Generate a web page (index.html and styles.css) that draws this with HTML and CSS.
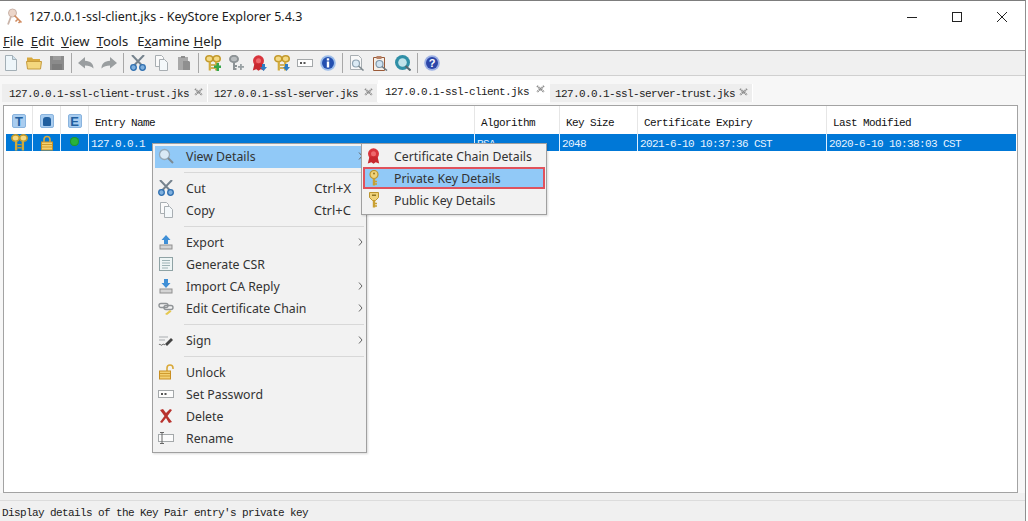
FILE: index.html
```html
<!DOCTYPE html>
<html lang="en">
<head>
<meta charset="utf-8">
<title>KeyStore Explorer</title>
<link rel="stylesheet" href="styles.css">
</head>
<body>
<svg class="defs" xmlns="http://www.w3.org/2000/svg">
  <symbol id="i-new" viewBox="0 0 16 16"><path d="M2.500 .5h7l4 4v11h-11z" fill="#eef6fa" stroke="#a3afb6"/><path d="M9.500 .5v4h4" fill="#cfe1eb" stroke="#a3afb6"/></symbol>
  <symbol id="i-open" viewBox="0 0 16 16"><path d="M1 2.500h5l1 1.500h7v3H1z" fill="#d8a93f"/><path d="M.5 6.500h15l-1 7.500h-13z" fill="#f4d77e" stroke="#c59a3c"/></symbol>
  <symbol id="i-save" viewBox="0 0 16 16"><rect x="1" y="1" width="14" height="14" fill="#8b8b8b"/><rect x="4" y="1" width="8" height="4" fill="#9d9d9d"/><rect x="3" y="9" width="10" height="6" fill="#7c7c7c"/></symbol>
  <symbol id="i-undo" viewBox="0 0 16 16"><path d="M7 2 0 8l7 5.500V10.500c3.500 0 6 .8 8.500 3 0-5-3-7.500-8.500-7.800z" fill="#9a9ea0"/></symbol>
  <symbol id="i-redo" viewBox="0 0 16 16"><path d="M9 2l7 6-7 5.500V10.500c-3.500 0-6 .8-8.500 3 0-5 3-7.500 8.500-7.800z" fill="#9a9ea0"/></symbol>
  <symbol id="i-cut" viewBox="0 0 16 16"><path d="M2 0l9.500 10M14 0 4.500 10" stroke="#76838e" stroke-width="2" fill="none"/><circle cx="3.500" cy="12.500" r="2.800" fill="#7fb0de" stroke="#2f6fb0" stroke-width="1.300"/><circle cx="12.500" cy="12.500" r="2.800" fill="#7fb0de" stroke="#2f6fb0" stroke-width="1.300"/></symbol>
  <symbol id="i-copy" viewBox="0 0 16 16"><path d="M2.500 .5h6l2 2v9h-8z" fill="#fafafa" stroke="#a8aeb2"/><path d="M6.500 4.500h5l3 3v8h-8z" fill="#f4f8fa" stroke="#a8aeb2"/></symbol>
  <symbol id="i-paste" viewBox="0 0 16 16"><path d="M2 2h10v13H2z" fill="#a8a8a8"/><path d="M5 1h4v2H5z" fill="#8c8c8c"/><path d="M7 6h6l1 1v8H7z" fill="#8f8f8f"/></symbol>
  <symbol id="i-keys" viewBox="0 0 16 16"><g fill="none" stroke="#c39a2c" stroke-width="1.600"><ellipse cx="4.300" cy="3.800" rx="3.500" ry="3" fill="#f4da85"/><ellipse cx="11.700" cy="3.800" rx="3.500" ry="3" fill="#f4da85"/></g><g fill="none" stroke="#d2ab3c" stroke-width="2.200"><path d="M4.800 6.500v9M11.200 6.500v9"/></g><path d="M6 10h2M6 13h2M10 10H8M10 13H8" stroke="#c39a2c" stroke-width="1.300"/></symbol>
  <symbol id="i-keygen" viewBox="0 0 16 16"><use href="#i-keys"/><path d="M9 10.500h2.500V8h2.500v2.500H16V13h-2v3h-2.500v-3H9z" fill="#35a64a"/></symbol>
  <symbol id="i-keypair" viewBox="0 0 16 16"><g fill="none" stroke="#8d9396" stroke-width="2"><ellipse cx="6" cy="4" rx="4" ry="3.200" fill="#b9bdbf"/><path d="M6 7v8M6 11h3M6 14h2.500"/></g><path d="M10 11h2V9h1.800v2H16v1.800h-2.200V15H12v-2.200h-2z" fill="#98a0a3"/></symbol>
  <symbol id="i-cert" viewBox="0 0 16 16"><circle cx="7.500" cy="5.800" r="5.500" fill="#d8343c"/><path d="M3.500 8.500 1.800 15.500l3.500-1.300 2.200 1.500 2.200-1.500 3.500 1.300-1.700-7z" fill="#c8282f"/><circle cx="7.500" cy="5.800" r="2.500" fill="#ee6a6e"/></symbol>
  <symbol id="i-certdown" viewBox="0 0 16 16"><use href="#i-cert"/><path d="M11 9h3v3h2l-3.500 4L9 12h2z" fill="#2d7cc4"/></symbol>
  <symbol id="i-keysdown" viewBox="0 0 16 16"><use href="#i-keys"/><path d="M11 9h3v3h2l-3.500 4L9 12h2z" fill="#2d7cc4"/></symbol>
  <symbol id="i-pass" viewBox="0 0 16 16"><rect x=".5" y="4.500" width="15" height="7" fill="#fdfdfd" stroke="#a4a8aa"/><rect x="3" y="7" width="2" height="2" fill="#555"/><rect x="6.500" y="7" width="2" height="2" fill="#555"/></symbol>
  <symbol id="i-info" viewBox="0 0 16 16"><circle cx="8" cy="8" r="7.800" fill="#9cbdea"/><circle cx="8" cy="8" r="6" fill="#2450b0"/><rect x="6.800" y="3.300" width="2.400" height="2.200" fill="#fff"/><rect x="6.800" y="6.500" width="2.400" height="6" fill="#fff"/></symbol>
  <symbol id="i-help" viewBox="0 0 16 16"><circle cx="8" cy="8" r="7.800" fill="#9cb0e4"/><circle cx="8" cy="8" r="6" fill="#2c46a8"/><text x="8" y="12" text-anchor="middle" font-family="Liberation Sans" font-weight="700" font-size="11" fill="#fff">?</text></symbol>
  <symbol id="i-finddoc" viewBox="0 0 16 16"><path d="M1.500 .5h8l3 3v11h-11z" fill="#f8f8f8" stroke="#a8aeb2"/><circle cx="7" cy="8.500" r="3.500" fill="#dcebf5" stroke="#8ea3b2" stroke-width="1.200"/><path d="M9.500 11l5 4.500" stroke="#7f8a90" stroke-width="1.600"/></symbol>
  <symbol id="i-findclip" viewBox="0 0 16 16"><path d="M1.500 2.500h11v13h-11z" fill="#f5efe8" stroke="#9a5a38"/><path d="M4.500 1h5v3h-5z" fill="#b98266"/><circle cx="7.500" cy="9" r="3.500" fill="#cfe3f2" stroke="#7f97aa" stroke-width="1.200"/><path d="M10 11.500l5 4" stroke="#6f7a80" stroke-width="1.600"/></symbol>
  <symbol id="i-findweb" viewBox="0 0 16 16"><circle cx="7.500" cy="7.500" r="7.500" fill="#2f8fa6"/><circle cx="7.500" cy="7.500" r="4.300" fill="#bfe3ea"/><path d="M10.500 11l5 4.500" stroke="#55666e" stroke-width="2"/></symbol>
  <symbol id="i-lock" viewBox="0 0 16 16"><path d="M5 7V4.500a3 3 0 0 1 6 0V7" fill="none" stroke="#d9a93a" stroke-width="1.600"/><rect x="2.500" y="7" width="11" height="8" fill="#f3d071" stroke="#c98f22"/><path d="M3 9.500h10M3 12h10" stroke="#cf9b2e"/></symbol>
  <symbol id="i-unlock" viewBox="0 0 16 16"><path d="M9 7V4a3 3 0 0 1 6 0v1" fill="none" stroke="#d9a93a" stroke-width="1.600"/><rect x="1.500" y="7" width="11" height="8" fill="#f3d071" stroke="#c98f22"/><path d="M2 9.500h10M2 12h10" stroke="#cf9b2e"/></symbol>
  <symbol id="i-view" viewBox="0 0 16 16"><circle cx="6.500" cy="6.500" r="5" fill="#d9e9f5" stroke="#94a8b8" stroke-width="1.300"/><path d="M10 10l5 5" stroke="#7d8a92" stroke-width="2"/></symbol>
  <symbol id="i-export" viewBox="0 0 16 16"><path d="M8 1l4.500 5H10v4H6V6H3.500z" fill="#3f8fd6"/><rect x="2" y="11" width="12" height="4" fill="#d4d4d4" stroke="#8f8f8f"/></symbol>
  <symbol id="i-import" viewBox="0 0 16 16"><path d="M6 1h4v4h2.500L8 10 3.500 5H6z" fill="#3f8fd6"/><rect x="2" y="11" width="12" height="4" fill="#d4d4d4" stroke="#8f8f8f"/></symbol>
  <symbol id="i-csr" viewBox="0 0 16 16"><rect x="1.500" y="1.500" width="13" height="13" fill="#eef5f5" stroke="#8fa3a5"/><path d="M4 4.500h8M4 7h8M4 9.500h8M4 12h6" stroke="#9db3b5"/></symbol>
  <symbol id="i-chain" viewBox="0 0 16 16"><rect x="1" y="3.500" width="9" height="4" rx="2" fill="none" stroke="#8f9396" stroke-width="1.400"/><rect x="6" y="5.500" width="9" height="4" rx="2" fill="none" stroke="#8f9396" stroke-width="1.400"/><path d="M7 14l5-4 1.500 1.500-4.500 3.500z" fill="#e6c84f"/></symbol>
  <symbol id="i-sign" viewBox="0 0 16 16"><path d="M1 5h9M1 8h6" stroke="#a9adb0"/><path d="M1 13c1-2 2 1 3 0s2-1 3 0" fill="none" stroke="#555"/><path d="M7 12l6-6 2 2-6 6z" fill="#444"/></symbol>
  <symbol id="i-delete" viewBox="0 0 16 16"><path d="M2 2l3-1 3 4 4-4 2 1-4.500 6L14 14l-3 1-3-5-4 5-2-1 4.500-6z" fill="#b8322d"/></symbol>
  <symbol id="i-rename" viewBox="0 0 16 16"><rect x=".5" y="4.500" width="15" height="7" fill="#fbfbfb" stroke="#a4a8aa"/><path d="M2 2.500h4M4 2.500v11M2 13.500h4" stroke="#666" fill="none"/></symbol>
  <symbol id="i-key" viewBox="0 0 16 16"><circle cx="8" cy="4.500" r="4" fill="#efd27a" stroke="#bd962f" stroke-width="1.200"/><circle cx="8" cy="3.500" r="1" fill="#8f7425"/><path d="M8 8.500V15.500" stroke="#c9a032" stroke-width="2.400"/><path d="M9 11.500h2M9 14h2" stroke="#c9a032" stroke-width="1.400"/></symbol>
  <symbol id="i-pubkey" viewBox="0 0 16 16"><path d="M3.500 .5h9v5l-3 3h-3l-3-3z" fill="#efd27a" stroke="#bd962f"/><rect x="6" y="2.500" width="4" height="1.500" fill="#8f7425"/><path d="M8 8.500V15.500" stroke="#c9a032" stroke-width="2.400"/><path d="M9 11.500h2M9 14h2" stroke="#c9a032" stroke-width="1.400"/></symbol>
  <symbol id="i-chev" viewBox="0 0 5 8"><path d="M1 .5 4 4 1 7.500" fill="none" stroke="#666"/></symbol>
  <symbol id="i-close" viewBox="0 0 9 8"><path d="M1 1l7 6M8 1 1 7" stroke="#8c8c8c" stroke-width="2" stroke-dasharray="1.300 .5"/></symbol>
  <symbol id="i-app" viewBox="0 0 18 18"><circle cx="6.500" cy="5" r="4" fill="#ecd6ca" stroke="#c9b3a8"/><path d="M8.500 7.500l7 7M12 11l-2.500 2.500M14.500 13l-2 2" stroke="#d08a5e" stroke-width="1.600"/><path d="M5 8.500 2 16.500" stroke="#c9b3a8" stroke-width="1.800"/></symbol>
</svg>

<div class="window">
  <header class="titlebar">
    <svg class="app-icon"><use href="#i-app"/></svg>
    <span class="title">127.0.0.1-ssl-client.jks - KeyStore Explorer 5.4.3</span>
    <div class="controls">
      <svg class="ctl" viewBox="0 0 10 10"><path d="M0 5.500h10" stroke="#222"/></svg>
      <svg class="ctl" viewBox="0 0 10 10"><rect x=".5" y=".5" width="9" height="9" fill="none" stroke="#222"/></svg>
      <svg class="ctl" viewBox="0 0 10 10"><path d="M0 0l10 10M10 0 0 10" stroke="#222"/></svg>
    </div>
  </header>
  <nav class="menubar">
    <span><u>F</u>ile</span><span><u>E</u>dit</span><span><u>V</u>iew</span><span><u>T</u>ools</span><span class="m-exam">E<u>x</u>amine</span><span><u>H</u>elp</span>
  </nav>
  <div class="toolbar">
    <svg class="tool"><use href="#i-new"/></svg>
    <svg class="tool"><use href="#i-open"/></svg>
    <svg class="tool"><use href="#i-save"/></svg>
    <i class="tsep"></i>
    <svg class="tool"><use href="#i-undo"/></svg>
    <svg class="tool"><use href="#i-redo"/></svg>
    <i class="tsep"></i>
    <svg class="tool"><use href="#i-cut"/></svg>
    <svg class="tool"><use href="#i-copy"/></svg>
    <svg class="tool"><use href="#i-paste"/></svg>
    <i class="tsep"></i>
    <svg class="tool"><use href="#i-keygen"/></svg>
    <svg class="tool"><use href="#i-keypair"/></svg>
    <svg class="tool"><use href="#i-certdown"/></svg>
    <svg class="tool"><use href="#i-keysdown"/></svg>
    <svg class="tool"><use href="#i-pass"/></svg>
    <svg class="tool"><use href="#i-info"/></svg>
    <i class="tsep"></i>
    <svg class="tool"><use href="#i-finddoc"/></svg>
    <svg class="tool"><use href="#i-findclip"/></svg>
    <svg class="tool"><use href="#i-findweb"/></svg>
    <i class="tsep"></i>
    <svg class="tool"><use href="#i-help"/></svg>
  </div>
  <div class="tabs">
    <div class="tab t1"><span>127.0.0.1-ssl-client-trust.jks</span><svg class="x"><use href="#i-close"/></svg></div>
    <div class="tab t2"><span>127.0.0.1-ssl-server.jks</span><svg class="x"><use href="#i-close"/></svg></div>
    <div class="tab t3 active"><span>127.0.0.1-ssl-client.jks</span><svg class="x"><use href="#i-close"/></svg></div>
    <div class="tab t4"><span>127.0.0.1-ssl-server-trust.jks</span><svg class="x"><use href="#i-close"/></svg></div>
  </div>
  <main class="pane">
    <div class="grid head">
      <div class="hc ic"><b class="badge">T</b></div>
      <div class="hc ic"><b class="badge"><i class="badge-lock"></i></b></div>
      <div class="hc ic"><b class="badge">E</b></div>
      <div class="hc">Entry Name</div>
      <div class="hc">Algorithm</div>
      <div class="hc">Key Size</div>
      <div class="hc">Certificate Expiry</div>
      <div class="hc last">Last Modified</div>
    </div>
    <div class="grid row">
      <div class="rc ic"><svg class="cell-icon wide"><use href="#i-keys"/></svg></div>
      <div class="rc ic"><svg class="cell-icon"><use href="#i-lock"/></svg></div>
      <div class="rc ic"><i class="dot"></i></div>
      <div class="rc">127.0.0.1</div>
      <div class="rc">RSA</div>
      <div class="rc">2048</div>
      <div class="rc">2021-6-10 10:37:36 CST</div>
      <div class="rc last">2020-6-10 10:38:03 CST</div>
    </div>
  </main>
  <div class="gap"></div>
  <footer class="status">Display details of the Key Pair entry's private key</footer>

  <div class="menu main-menu">
    <div class="item hot"><svg class="mi"><use href="#i-view"/></svg><span>View Details</span><svg class="chev"><use href="#i-chev"/></svg></div>
    <hr>
    <div class="item"><svg class="mi"><use href="#i-cut"/></svg><span>Cut</span><span class="sc">Ctrl+X</span></div>
    <div class="item"><svg class="mi"><use href="#i-copy"/></svg><span>Copy</span><span class="sc">Ctrl+C</span></div>
    <hr>
    <div class="item"><svg class="mi"><use href="#i-export"/></svg><span>Export</span><svg class="chev"><use href="#i-chev"/></svg></div>
    <div class="item"><svg class="mi"><use href="#i-csr"/></svg><span>Generate CSR</span></div>
    <div class="item"><svg class="mi"><use href="#i-import"/></svg><span>Import CA Reply</span><svg class="chev"><use href="#i-chev"/></svg></div>
    <div class="item"><svg class="mi"><use href="#i-chain"/></svg><span>Edit Certificate Chain</span><svg class="chev"><use href="#i-chev"/></svg></div>
    <hr>
    <div class="item"><svg class="mi"><use href="#i-sign"/></svg><span>Sign</span><svg class="chev"><use href="#i-chev"/></svg></div>
    <hr>
    <div class="item"><svg class="mi"><use href="#i-unlock"/></svg><span>Unlock</span></div>
    <div class="item"><svg class="mi"><use href="#i-pass"/></svg><span>Set Password</span></div>
    <div class="item"><svg class="mi"><use href="#i-delete"/></svg><span>Delete</span></div>
    <div class="item"><svg class="mi"><use href="#i-rename"/></svg><span>Rename</span></div>
  </div>

  <div class="menu sub-menu">
    <div class="item"><svg class="mi"><use href="#i-cert"/></svg><span>Certificate Chain Details</span></div>
    <div class="item hot marked"><svg class="mi"><use href="#i-key"/></svg><span>Private Key Details</span></div>
    <div class="item"><svg class="mi"><use href="#i-pubkey"/></svg><span>Public Key Details</span></div>
  </div>
</div>
</body>
</html>
```

FILE: styles.css
```css
* { box-sizing: border-box; }
html, body { margin: 0; height: 100%; background: #fff; }
.defs { display: none; }

.window {
  position: relative;
  width: 1026px;
  height: 521px;
  display: flex;
  flex-direction: column;
  overflow: hidden;
  border-top: 1px solid #7d7d7d;
  border-right: 1px solid #8f8f8f;
  font-family: "Noto Sans", sans-serif;
  font-size: 13px;
  color: #222;
  background: #f7f7f7;
}

.titlebar {
  height: 31px;
  flex: none;
  display: flex;
  align-items: center;
  background: #fff;
  padding-left: 6px;
}
.app-icon { width: 18px; height: 18px; margin-right: 5px; }
.title { font-size: 12.500px; color: #1c1c1c; }
.controls { margin-left: auto; display: flex; gap: 35px; padding-right: 18px; }
.ctl { width: 10px; height: 10px; }

.menubar {
  height: 18px;
  flex: none;
  background: #fff;
  display: flex;
  gap: 7px;
  padding-left: 3px;
  line-height: 18px;
  font-size: 13px;
  color: #222;
}
.m-exam { margin-left: 2px; margin-right: -3px; }

.toolbar {
  height: 26px;
  flex: none;
  display: flex;
  align-items: center;
  gap: 7px;
  padding-left: 3px;
  background: #f0f0f0;
  border-top: 1px solid #a2a2a2;
  border-bottom: 1px solid #d0d0d0;
}
.tool { width: 16px; height: 16px; flex: none; }
.tsep { width: 1px; height: 20px; background: #a8a8a8; margin: 0 -1px; flex: none; }

.tabs {
  height: 29px;
  flex: none;
  display: flex;
  align-items: flex-end;
  padding: 0 0 3px 2px;
  font-family: "Liberation Mono", monospace;
  font-size: 11px;
  letter-spacing: -.6px;
  background: #f7f7f7;
  color: #222;
}
.tab {
  height: 18px;
  display: flex;
  align-items: center;
  padding-top: 2px;
  padding-left: 7px;
  background: #eeeeee;
  border-right: 1px solid #fff;
  white-space: pre;
}
.t1 { width: 206px; }
.t2 { width: 170px; padding-left: 6px; }
.t3 { width: 172px; }
.t4 { width: 203px; padding-left: 5px; }
.tab.active { height: 23px; background: #fff; margin-bottom: -1px; padding-top: 0; }
.x {
  width: 9px;
  height: 8px;
  margin-left: auto;
  margin-right: 4px;
  margin-bottom: 5px;
  flex: none;
}

.pane {
  flex: none;
  height: 388px;
  margin: 0 7px 0 3px;
  padding: 0 1px 0 2px;
  border: 1px solid #a3a3a3;
  background: #fff;
  font-family: "Liberation Mono", monospace;
  font-size: 11px;
  letter-spacing: -.6px;
}
.grid {
  display: grid;
  grid-template-columns: 27px 28px 28px 386px 85px 78px 189px 189px;
}
.head { height: 28px; }
.hc {
  display: flex;
  align-items: center;
  padding: 6px 0 0 6px;
  color: #111;
  white-space: pre;
  border-right: 1px solid #e6e6e6;
}
.hc.last { border-right: 0; }
.hc.ic, .rc.ic { justify-content: center; padding: 0; }
.hc.ic { padding-top: 2px; }
.badge {
  width: 14px;
  height: 14px;
  display: flex;
  align-items: center;
  justify-content: center;
  background: #a9cdf0;
  border: 1px solid #8ab4de;
  border-radius: 2px;
  color: #215f9f;
  font: 700 13px "Liberation Sans", sans-serif;
  letter-spacing: 0;
}
.badge-lock { width: 8px; height: 9px; background: #215f9f; border-radius: 3px 3px 1px 1px; }
.row { height: 17px; background: #0078d7; color: #e8f4ff; }
.rc {
  display: flex;
  align-items: center;
  padding: 2px 0 0 2px;
  white-space: pre;
  border-right: 1px solid #dff0ff;
}
.rc.last { border-right: 0; }
.cell-icon { width: 16px; height: 16px; }
.cell-icon.wide { width: 17px; height: 17px; }
.dot {
  width: 9px;
  height: 9px;
  border-radius: 50%;
  background: #28b33c;
  box-shadow: inset 0 0 0 1px #1d8f36;
  margin-top: -3px;
}

.gap { height: 8px; flex: none; background: #f0f0f0; border-bottom: 1px solid #dcdcdc; }
.status {
  flex: 1;
  padding: 2px 0 0 2px;
  background: #f0f0f0;
  font-family: "Liberation Mono", monospace;
  font-size: 11px;
  letter-spacing: -.6px;
  line-height: 20px;
  color: #222;
}

.menu {
  position: absolute;
  top: 142px;
  padding: 2px 0;
  background: #f2f2f2;
  border: 1px solid #a0a0a0;
  box-shadow: 1px 1px 2px rgba(0, 0, 0, .15);
  color: #333;
  font-size: 12.300px;
}
.main-menu { left: 152px; width: 215px; padding: 2px 2px; }
.sub-menu { left: 361px; width: 186px; padding: 2px 1px; }
.item {
  height: 22px;
  display: flex;
  align-items: center;
  padding-bottom: 2px;
  padding-left: 3px;
  white-space: nowrap;
}
.item.hot { background: #91c9f7; }
.item.marked {
  margin: -1px 0 1px;
  padding-bottom: 0;
  outline: 2px solid #e0525c;
  outline-offset: -2px;
}
.mi { width: 16px; height: 16px; margin-right: 12px; flex: none; }
.sc { margin-left: auto; margin-right: 13px; font-size: 13px; }
.chev { width: 5px; height: 8px; margin-left: auto; margin-right: 1px; flex: none; }
hr {
  height: 1px;
  border: 0;
  margin: 4px 0 5px 29px;
  background: #d8d8d8;
}
```
